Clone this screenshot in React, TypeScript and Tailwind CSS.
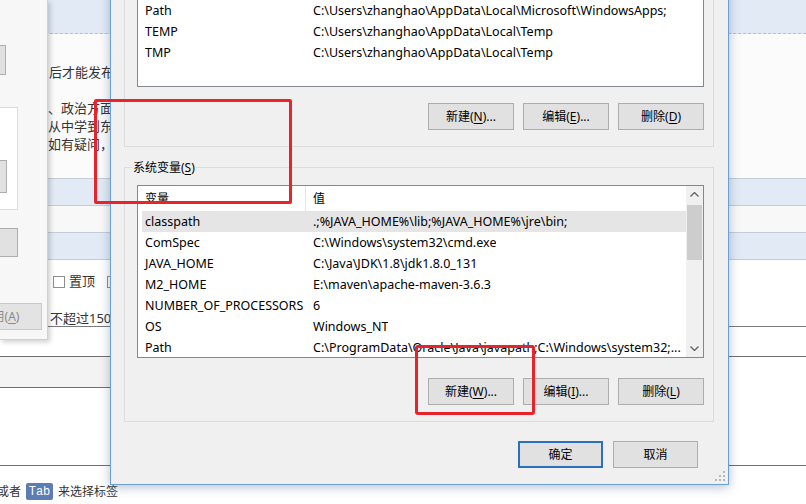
import React from "react";

const userRows = [
  ["OneDrive", "C:\\Users\\zhanghao\\OneDrive"],
  ["Path", "C:\\Users\\zhanghao\\AppData\\Local\\Microsoft\\WindowsApps;"],
  ["TEMP", "C:\\Users\\zhanghao\\AppData\\Local\\Temp"],
  ["TMP", "C:\\Users\\zhanghao\\AppData\\Local\\Temp"],
];

const sysRows = [
  ["classpath", ".;%JAVA_HOME%\\lib;%JAVA_HOME%\\jre\\bin;"],
  ["ComSpec", "C:\\Windows\\system32\\cmd.exe"],
  ["JAVA_HOME", "C:\\Java\\JDK\\1.8\\jdk1.8.0_131"],
  ["M2_HOME", "E:\\maven\\apache-maven-3.6.3"],
  ["NUMBER_OF_PROCESSORS", "6"],
  ["OS", "Windows_NT"],
  ["Path", "C:\\ProgramData\\Oracle\\Java\\javapath;C:\\Windows\\system32;..."],
];

function Btn({ text, k, dots, w = "w-[86px]" }: { text: string; k?: string; dots?: boolean; w?: string }) {
  return (
    <div className={`flex h-[27px] ${w} items-center justify-center border border-[#adadad] bg-[#e1e1e1] text-[12px] text-black`}>
      {text}
      {k && (
        <>
          (<span className="underline underline-offset-2">{k}</span>)
        </>
      )}
      {dots ? "..." : ""}
    </div>
  );
}

function Row({ name, value, selected }: { name: string; value: string; selected?: boolean }) {
  return (
    <div className={`ml-[4px] flex h-[21px] items-center whitespace-nowrap pt-[1px] text-[12.5px] ${selected ? "bg-[#e5e5e5]" : ""}`}>
      <div className="w-[164px] shrink-0 pl-[3px]">{name}</div>
      <div className="overflow-hidden pl-[7px]">{value}</div>
    </div>
  );
}

function Header() {
  return (
    <div className="flex h-[25px] items-center whitespace-nowrap">
      <div className="flex h-full w-[168px] shrink-0 items-center border-r border-[#e5e5e5] pl-[7px]">变量</div>
      <div className="pl-[7px]">值</div>
    </div>
  );
}

function Chevron({ down }: { down?: boolean }) {
  return (
    <svg width="9" height="5" viewBox="0 0 9 5">
      <polyline
        points={down ? "0.5,0.5 4.5,4.5 8.5,0.5" : "0.5,4.5 4.5,0.5 8.5,4.5"}
        fill="none"
        stroke="#606060"
        strokeWidth="1.3"
      />
    </svg>
  );
}

function Checkbox() {
  return <div className="h-[12px] w-[12px] shrink-0 border border-[#8f8f8f] bg-white" />;
}

export default function App() {
  return (
    <div className="relative h-[504px] w-[806px] overflow-hidden bg-white font-['Noto_Sans','Noto_Sans_CJK_SC',sans-serif] text-black">
      {/* page behind the dialogs */}
      <div className="flex flex-col text-[13px] text-[#333]">
        <div className="h-[34px] border-b border-dashed border-[#b4c0ce] bg-[#e2eaf5]" />
        <div className="flex h-[144px] flex-col bg-[#fbfbfb] pl-[48px] leading-[18px]">
          <div className="mt-[29px] whitespace-nowrap pl-[1px]">后才能发布文章，请遵守社区规范</div>
          <div className="mt-[18px] whitespace-nowrap">、政治方面的内容将被删除</div>
          <div className="whitespace-nowrap">从中学到东西，共同进步</div>
          <div className="whitespace-nowrap">如有疑问，请联系管理员</div>
        </div>
        <div className="h-[28px] border-t border-b border-[#c3ccd7] border-b-dashed bg-[#e2eaf5]" />
        <div className="h-[26px] bg-[#f8f8f8]" />
        <div className="h-[28px] border-t border-b border-[#c3ccd7] border-b-dashed bg-[#e2eaf5]" />
        <div className="flex h-[67px] flex-col border-b border-[#7a7a7a] pl-[50px]">
          <div className="mt-[14px] flex h-[16px] items-center gap-[4px] pl-[3px]">
            <Checkbox />
            <span>置顶</span>
            <div className="ml-[8px]">
              <Checkbox />
            </div>
          </div>
          <div className="mt-[20px] whitespace-nowrap leading-[16px]">不超过1500字</div>
        </div>
        <div className="h-[30px] border-b border-[#6f6f6f]" />
        <div className="h-[31px]">
          <div className="h-full w-[640px] border-b border-[#6f6f6f] bg-[#f3f3f3]" />
        </div>
        <div className="h-[78px] border-b border-[#6f6f6f]" />
        <div className="flex h-[37px] items-center gap-[5px] pt-[14px] text-[12px] text-[#333]">
          <span className="-ml-[3px]">或者</span>
          <span className="flex h-[17px] w-[27px] items-center justify-center rounded-[2px] bg-[#5b7db3] font-['Liberation_Mono',monospace] text-[12px] text-white">
            Tab
          </span>
          <span>来选择标签</span>
        </div>
      </div>

      {/* small window on the left */}
      <div className="absolute left-0 top-0 flex h-[340px] w-[48px] flex-col overflow-hidden border-r border-b border-[#d0d0d0] bg-[#f7f7f7] shadow-[2px_2px_5px_rgba(0,0,0,0.2)]">
        <div className="-ml-[20px] mt-[45px] h-[30px] w-[26px] border border-[#adadad] bg-[#e1e1e1]" />
        <div className="-ml-[20px] mt-[32px] flex h-[103px] w-[38px] flex-col border border-[#dcdcdc] bg-white">
          <div className="mt-[52px] h-[33px] w-[26px] border border-[#adadad] bg-[#e1e1e1]" />
        </div>
        <div className="-ml-[20px] mt-[18px] h-[29px] w-[38px] border border-[#adadad] bg-[#e1e1e1]" />
        <div className="-ml-[42px] mt-[46px] flex h-[27px] w-[84px] items-center justify-center border border-[#c9c9c9] bg-[#e3e3e3] text-[12px] text-[#8a8a8a]">
          应用(<span className="underline underline-offset-2">A</span>)
        </div>
      </div>

      {/* environment variables dialog */}
      <div className="absolute left-[110px] top-[-90px] flex h-[575px] w-[619px] flex-col border border-[#6a9fd8] bg-[#f0f0f0] text-[12px] shadow-[0_2px_10px_rgba(40,70,120,0.35)]">
        <fieldset className="mt-[16px] ml-[13px] mr-[14px] border border-[#dcdcdc] pl-[12px] pr-[9px] pt-[9px] pb-[16px]">
          <legend className="-ml-[5px] px-[1px] leading-[17px]">
            zhanghao 的用户变量(<span className="underline underline-offset-2">U</span>)
          </legend>
          <div className="h-[134px] overflow-hidden border border-[#828790] bg-white">
            <Header />
            {userRows.map(([n, v]) => (
              <Row key={n} name={n} value={v} />
            ))}
          </div>
          <div className="mt-[16px] flex justify-end gap-[9px]">
            <Btn text="新建" k="N" dots />
            <Btn text="编辑" k="E" dots />
            <Btn text="删除" k="D" />
          </div>
        </fieldset>

        <fieldset className="mt-[12px] ml-[13px] mr-[14px] border border-[#dcdcdc] pl-[12px] pr-[9px] pt-[9px] pb-[16px]">
          <legend className="-ml-[5px] px-[1px] leading-[17px]">
            系统变量(<span className="underline underline-offset-2">S</span>)
          </legend>
          <div className="flex h-[173px] border border-[#828790] bg-white">
            <div className="min-w-0 flex-1 overflow-hidden">
              <Header />
              {sysRows.map(([n, v], i) => (
                <Row key={n + i} name={n} value={v} selected={i === 0} />
              ))}
            </div>
            <div className="flex w-[17px] shrink-0 flex-col bg-[#f0f0f0]">
              <div className="flex h-[17px] items-center justify-center">
                <Chevron />
              </div>
              <div className="mx-[1px] mt-[2px] h-[55px] bg-[#cdcdcd]" />
              <div className="flex-1" />
              <div className="flex h-[17px] items-center justify-center">
                <Chevron down />
              </div>
            </div>
          </div>
          <div className="mt-[20px] flex justify-end gap-[9px]">
            <Btn text="新建" k="W" dots />
            <Btn text="编辑" k="I" dots />
            <Btn text="删除" k="L" />
          </div>
        </fieldset>

        <div className="mr-[30px] mt-[19px] flex justify-end gap-[10px]">
          <div className="flex h-[27px] w-[85px] items-center justify-center border-2 border-[#2b70bf] bg-[#e1e1e1]">确定</div>
          <Btn text="取消" w="w-[85px]" />
        </div>

        <svg className="absolute bottom-[2px] right-[2px]" width="11" height="11" viewBox="0 0 11 11">
          {[
            [8, 0],
            [8, 4],
            [4, 4],
            [8, 8],
            [4, 8],
            [0, 8],
          ].map(([x, y]) => (
            <rect key={`${x}-${y}`} x={x} y={y} width="2" height="2" fill="#b8b8b8" />
          ))}
        </svg>
      </div>

      {/* red annotation boxes */}
      <div className="absolute left-[94px] top-[99px] h-[105px] w-[198px] rounded-[2px] border-[3px] border-[#e8232b]" />
      <div className="absolute left-[415px] top-[345px] h-[70px] w-[120px] rounded-[3px] border-[3px] border-[#e8232b]" />
    </div>
  );
}
